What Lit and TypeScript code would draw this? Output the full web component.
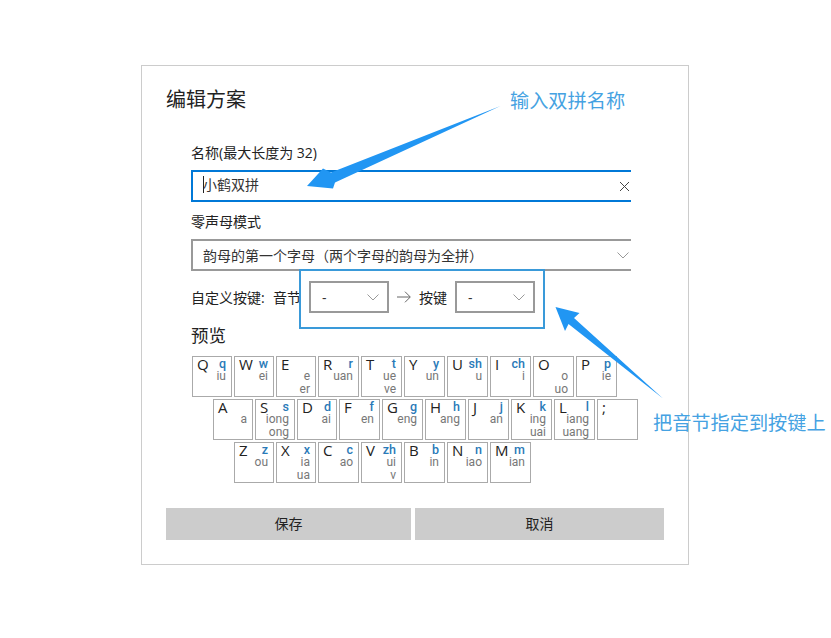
import { LitElement, html, css } from "lit";
import { customElement } from "lit/decorators.js";

type K = { l: string; s?: string; a?: string; b?: string; n?: boolean };
const rows: K[][] = [
  [
    { l: "Q", s: "q", a: "iu", n: true },
    { l: "W", s: "w", a: "ei", n: true },
    { l: "E", a: "e", b: "er", n: true },
    { l: "R", s: "r", a: "uan" },
    { l: "T", s: "t", a: "ue", b: "ve" },
    { l: "Y", s: "y", a: "un" },
    { l: "U", s: "sh", a: "u" },
    { l: "I", s: "ch", a: "i" },
    { l: "O", a: "o", b: "uo" },
    { l: "P", s: "p", a: "ie" },
  ],
  [
    { l: "A", a: "a", n: true },
    { l: "S", s: "s", a: "iong", b: "ong", n: true },
    { l: "D", s: "d", a: "ai", n: true },
    { l: "F", s: "f", a: "en" },
    { l: "G", s: "g", a: "eng" },
    { l: "H", s: "h", a: "ang" },
    { l: "J", s: "j", a: "an" },
    { l: "K", s: "k", a: "ing", b: "uai" },
    { l: "L", s: "l", a: "iang", b: "uang" },
    { l: ";" },
  ],
  [
    { l: "Z", s: "z", a: "ou", n: true },
    { l: "X", s: "x", a: "ia", b: "ua", n: true },
    { l: "C", s: "c", a: "ao" },
    { l: "V", s: "zh", a: "ui", b: "v" },
    { l: "B", s: "b", a: "in" },
    { l: "N", s: "n", a: "iao" },
    { l: "M", s: "m", a: "ian" },
  ],
];

const chevron = html`<svg class="chev" width="12" height="7" viewBox="0 0 12 7"><path d="M.5 .5l5.5 5.5 5.5-5.5" fill="none" stroke="#999" stroke-width="1"/></svg>`;

@customElement("app-root")
export class AppRoot extends LitElement {
  static styles = css`
    :host {
      display: block;
      width: 831px;
      height: 638px;
      position: relative;
      background: #fff;
      overflow: hidden;
      font-family: "Open Sans", "Noto Sans CJK SC", sans-serif;
      color: #222;
      padding: 65px 0 0 141px;
      box-sizing: border-box;
    }
    .dialog {
      box-sizing: border-box;
      width: 548px;
      height: 500px;
      border: 1px solid #ccc;
      padding: 18px 24px 0;
      display: flex;
      flex-direction: column;
    }
    h1 {
      margin: 0;
      font-size: 20px;
      font-weight: 400;
      line-height: 32px;
      color: #222;
    }
    .form {
      margin: 28px 0 0 25px;
      width: 440px;
      overflow: hidden;
      font-size: 14px;
      display: flex;
      flex-direction: column;
    }
    .label {
      line-height: 18px;
      height: 18px;
      margin-bottom: 8px;
    }
    .field {
      box-sizing: border-box;
      height: 32px;
      width: 460px;
      border: 2px solid #999;
      display: flex;
      align-items: center;
      padding: 0 10px;
      font-size: 14px;
      color: #333;
      flex: none;
    }
    .input {
      border-color: #0078d7;
      margin-bottom: 11px;
      position: relative;
      padding-bottom: 4px;
    }
    .caret {
      width: 1px;
      height: 17px;
      background: #222;
      margin-right: -1px;
    }
    .x {
      position: absolute;
      left: 426px;
      top: 9px;
    }
    .zero {
      margin-bottom: 10px;
      position: relative;
      padding-bottom: 1px;
    }
    .zero .chev {
      position: absolute;
      left: 424px;
      top: 11px;
    }
    .custom {
      display: flex;
      align-items: center;
      height: 32px;
      white-space: nowrap;
    }
    .custom .t1 { width: 82px; }
    .custom .t2 { width: 36px; }
    .mini {
      box-sizing: border-box;
      width: 80px;
      height: 32px;
      border: 2px solid #999;
      display: flex;
      align-items: center;
      justify-content: space-between;
      padding: 0 8px 0 11px;
      color: #333;
      flex: none;
    }
    .to {
      margin: 0 8px;
      display: block;
      flex: none;
    }
    .t3 { width: 36px; }
    .preview {
      font-size: 17.5px;
      line-height: 24px;
      margin: 10px 0 9px;
      font-weight: 400;
      color: #222;
    }
    .kb {
      display: flex;
      flex-direction: column;
      gap: 2px;
      margin-left: 26px;
      width: 480px;
    }
    .kbrow {
      display: flex;
      gap: 2px;
      height: 41px;
    }
    .r1 { margin-left: 21px; }
    .r2 { margin-left: 42px; }
    .key {
      box-sizing: border-box;
      width: 41px;
      height: 41px;
      border: 1px solid #aaa;
      padding: 0 5px 0 4px;
      display: flex;
      flex-direction: column;
      flex: none;
    }
    .key.narrow { width: 40px; }
    .top {
      display: flex;
      justify-content: space-between;
      height: 13px;
      line-height: 13px;
    }
    .letter {
      font-size: 15px;
      color: #222;
      margin-top: 1px;
    }
    .sp {
      font-size: 12.5px;
      color: #2a7ab8;
      font-weight: 500;
      font-family: Roboto, sans-serif;
    }
    .fin {
      font-family: Roboto, sans-serif;
      font-size: 12px;
      line-height: 13px;
      height: 13px;
      color: #777;
      text-align: right;
    }
    .btns {
      display: flex;
      gap: 4px;
      margin-bottom: 24px;
    }
    .btn {
      box-sizing: border-box;
      height: 32px;
      background: #ccc;
      display: flex;
      align-items: center;
      justify-content: center;
      font-size: 14px;
      color: #222;
      padding-bottom: 2px;
    }
    .save { width: 245px; }
    .cancel { width: 249px; }
    .spacer { flex: 1; }
    .over {
      position: absolute;
      inset: 0;
      pointer-events: none;
    }
    .rect {
      position: absolute;
      left: 299px;
      top: 269px;
      width: 246px;
      height: 60px;
      box-sizing: border-box;
      border: 2px solid #3a9ad9;
    }
    .note {
      position: absolute;
      font-size: 19.2px;
      line-height: 26px;
      color: #45a2e2;
      white-space: nowrap;
    }
    .n1 { left: 510px; top: 88px; }
    .n2 { left: 653px; top: 410px; }
    .arrows { position: absolute; left: 0; top: 0; }
  `;

  key(k: K) {
    return html`<div class="key ${k.n ? "narrow" : ""}">
      <div class="top"><span class="letter">${k.l}</span><span class="sp">${k.s ?? ""}</span></div>
      <div class="fin">${k.a ?? ""}</div>
      <div class="fin">${k.b ?? ""}</div>
    </div>`;
  }

  render() {
    return html`
      <div class="dialog">
        <h1>编辑方案</h1>
        <div class="form">
          <div class="label">名称(最大长度为 32)</div>
          <div class="field input">
            <span class="caret"></span><span>小鹤双拼</span>
            <svg class="x" width="11" height="11" viewBox="0 0 11 11"><path d="M1 1l9 9M10 1l-9 9" stroke="#444" stroke-width="1" fill="none"/></svg>
          </div>
          <div class="label">零声母模式</div>
          <div class="field zero">韵母的第一个字母（两个字母的韵母为全拼）${chevron}</div>
          <div class="custom">
            <span class="t1">自定义按键:</span><span class="t2">音节</span>
            <div class="mini"><span>-</span>${chevron}</div>
            <svg class="to" width="14" height="12" viewBox="0 0 14 12"><path d="M0 6h13M8 .7l5.3 5.3-5.3 5.3" fill="none" stroke="#666" stroke-width="1"/></svg>
            <span class="t3">按键</span>
            <div class="mini"><span>-</span>${chevron}</div>
          </div>
          <div class="preview">预览</div>
        </div>
        <div class="kb">
          ${rows.map(
            (r, i) => html`<div class="kbrow r${i}">${r.map((k) => this.key(k))}</div>`
          )}
        </div>
        <div class="spacer"></div>
        <div class="btns">
          <div class="btn save">保存</div>
          <div class="btn cancel">取消</div>
        </div>
      </div>
      <div class="over">
        <div class="rect"></div>
        <svg class="arrows" width="831" height="638" viewBox="0 0 831 638">
          <polygon fill="#2196f3" points="500.5,106 331,172.5 323,168.5 307,186 333,188.5 335,182.5" />
          <polygon fill="#2196f3" points="663,398.5 574,318 579.5,313 555.5,307 565,331 568.5,324" />
        </svg>
        <div class="note n1">输入双拼名称</div>
        <div class="note n2">把音节指定到按键上</div>
      </div>
    `;
  }
}
